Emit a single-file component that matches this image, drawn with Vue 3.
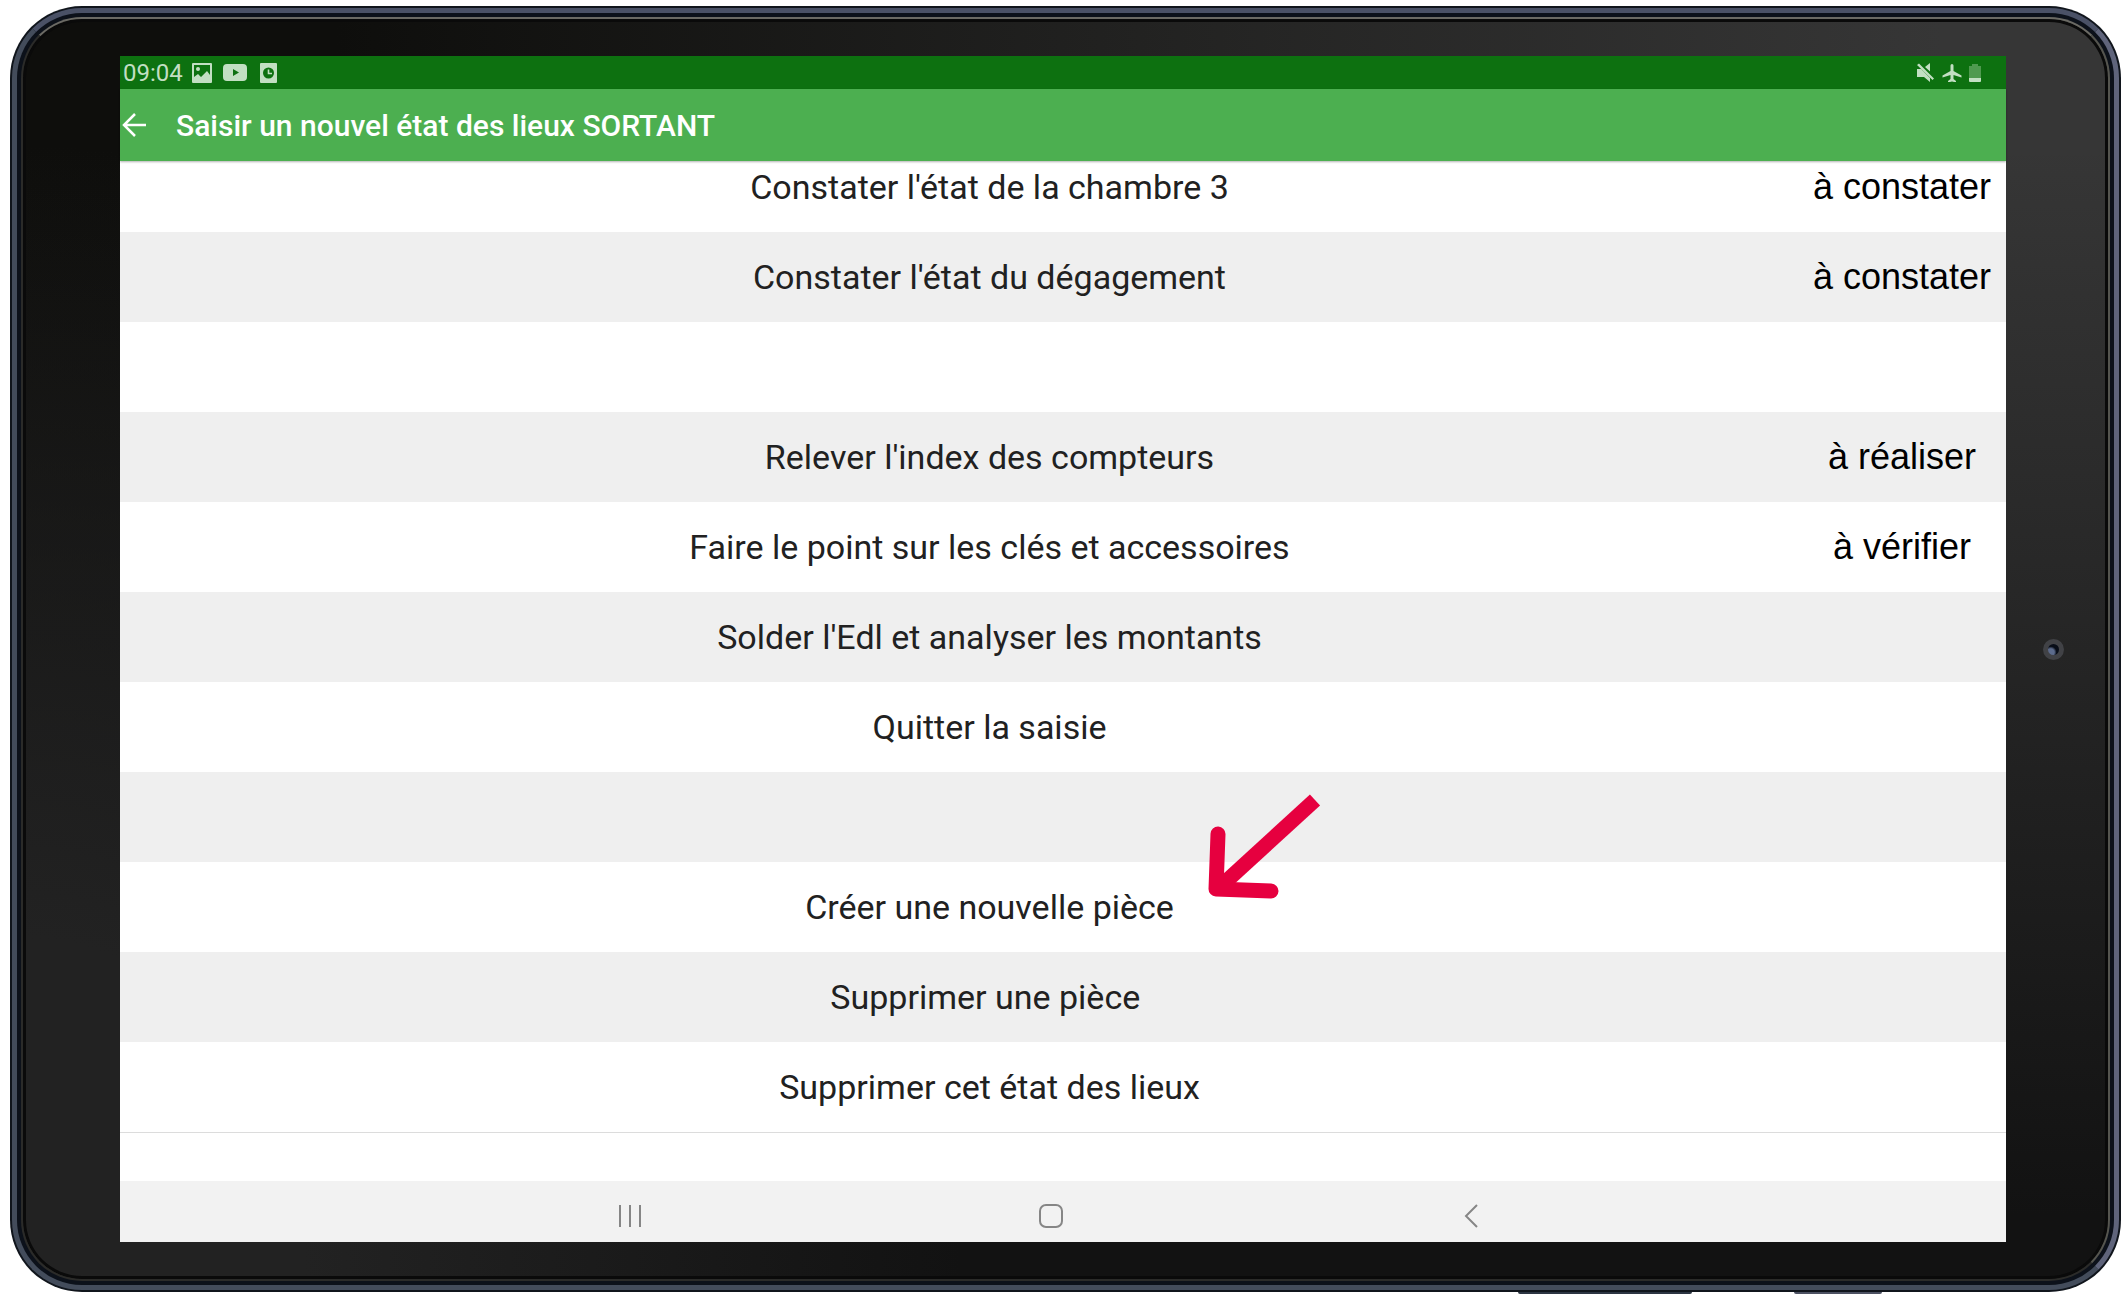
<script setup>
const rows = [
  { label: "Constater l'état de la chambre 3", status: 'à constater', cut: true },
  { label: "Constater l'état du dégagement", status: 'à constater' },
  { label: '', status: '' },
  { label: "Relever l'index des compteurs", status: 'à réaliser' },
  { label: 'Faire le point sur les clés et accessoires', status: 'à vérifier' },
  { label: "Solder l'Edl et analyser les montants", status: '' },
  { label: 'Quitter la saisie', status: '' },
  { label: '', status: '' },
  { label: 'Créer une nouvelle pièce', status: '', pointed: true },
  { label: 'Supprimer une pièce\u00a0', status: '' },
  { label: 'Supprimer cet état des lieux', status: '' }
]
</script>

<template>
  <div class="stage">
    <div class="device">
      <div class="rim">
        <div class="bezel">
          <main class="screen">
            <div class="status-bar">
              <span class="clock">09:04</span>
              <svg class="ico-picture" width="20" height="20" viewBox="0 0 20 20">
                <path fill-rule="evenodd" d="M1 0h18a1 1 0 0 1 1 1v18a1 1 0 0 1-1 1H1a1 1 0 0 1-1-1V1a1 1 0 0 1 1-1zM2 2v12l4-3 3 3 6-6 3 4V2z" />
                <circle cx="6" cy="6" r="2" />
              </svg>
              <svg class="ico-video" width="24" height="18" viewBox="0 0 24 18">
                <path fill-rule="evenodd" d="M4 0h16q4 0 4 4v9q0 4-4 4H4q-4 0-4-4V4q0-4 4-4zM10 5v7l6-3.500z" />
              </svg>
              <svg class="ico-clock" width="17" height="20" viewBox="0 0 17 20">
                <path fill-rule="evenodd" d="M1 0h15q1 0 1 1v18q0 1-1 1H1q-1 0-1-1V1q0-1 1-1zM8.500 4.500a5.500 5.500 0 1 0 0 11a5.500 5.500 0 1 0 0-11z" />
                <path d="M8.500 6.500v4h3.500" fill="none" stroke="#c2dfc2" stroke-width="1.600" />
              </svg>
              <span class="spacer"></span>
              <svg width="18" height="20" viewBox="0 0 18 20">
                <path d="M0 6h4l9 9v4l-6-5H0zM8 4l5-4v8.500zM0 2l2-1.500L17 15.500 15.500 17z" />
              </svg>
              <svg class="ico-plane" width="20" height="18" viewBox="0 0 20 18">
                <path d="M8.500 1.500a1.500 1.500 0 0 1 3 0V7l8 4.500v2l-8-2.500v4l2.500 2v1.500L10 17.500 6 18.500V17l2.500-2v-4l-8 2.500v-2l8-4.500z" />
              </svg>
              <svg class="ico-battery" width="12" height="18" viewBox="0 0 12 18">
                <path d="M3 0h6v2h3v12H0V2h3z" fill="#4f9a4f" />
                <path d="M0 14h12v3q0 1-1 1H1q-1 0-1-1z" />
              </svg>
            </div>

            <header class="app-bar">
              <button class="back" type="button" aria-label="Retour">
                <svg width="24" height="24" viewBox="0 0 24 24">
                  <path d="M24 12H2M13 1L2 12l11 11" fill="none" stroke="#fff" stroke-width="2.500" />
                </svg>
              </button>
              <h1>Saisir un nouvel état des lieux SORTANT</h1>
            </header>

            <ul class="list">
              <li v-for="(row, i) in rows" :key="i" class="row" :class="{ cut: row.cut }">
                <span class="label">{{ row.label }}</span>
                <span class="status">{{ row.status }}</span>
                <svg v-if="row.pointed" class="pointer" width="114" height="108" viewBox="0 0 114 108">
                  <path d="M107 8L13 94" fill="none" stroke="#e6003f" stroke-width="15" />
                  <path d="M10 42L8 97l55 2" fill="none" stroke="#e6003f" stroke-width="15" stroke-linecap="round" stroke-linejoin="round" />
                </svg>
              </li>
            </ul>

            <nav class="nav-bar">
              <button type="button" aria-label="Applications récentes">
                <svg width="24" height="24" viewBox="0 0 24 24">
                  <path d="M2 1v22M12 1v22M22 1v22" />
                </svg>
              </button>
              <button type="button" aria-label="Accueil">
                <svg width="26" height="24" viewBox="0 0 26 24">
                  <rect x="2" y="1" width="22" height="22" rx="6" />
                </svg>
              </button>
              <button type="button" aria-label="Précédent">
                <svg width="24" height="24" viewBox="0 0 24 24">
                  <path d="M17 1L6 12l11 11" />
                </svg>
              </button>
            </nav>
          </main>
          <div class="side">
            <span class="camera"></span>
          </div>
        </div>
      </div>
    </div>
    <div class="edge-keys">
      <span class="key power"></span>
      <span class="key"></span>
    </div>
  </div>
</template>

<style>
body {
  margin: 0;
  background: #fff;
}
</style>

<style scoped>
.stage {
  padding: 6px 6px 0 10px;
  font-family: Roboto, sans-serif;
}

.device {
  padding: 2px;
  border-radius: 72px;
  background: #10151c;
}

.rim {
  padding: 4px;
  border: 5px solid #434c5b;
  border-top-color: #4a5166;
  border-right-color: #5f647b;
  border-radius: 70px;
  background: #0c111a;
}

.bezel {
  display: flex;
  padding: 37px 0 37px 97px;
  border: 2px solid #2b2b29;
  border-top-color: #6b6a64;
  border-right-color: #55554f;
  border-radius: 61px;
  box-shadow: inset 0 0 0 3px #0a0a0a;
  background:
    radial-gradient(ellipse 45% 90% at 0% 100%, #222 30%, transparent 100%),
    linear-gradient(180deg, transparent 10%, #121212 95%),
    linear-gradient(90deg, #0e0e0c 15%, #363636 92%);
}

.side {
  display: flex;
  width: 102px;
  align-items: center;
  justify-content: center;
  padding-right: 8px;
  box-sizing: border-box;
}

.camera {
  width: 11px;
  height: 11px;
  border: 5px solid #414246;
  border-radius: 50%;
  background: radial-gradient(circle at 25% 75%, #5c6b8c 0 30%, #080d18 50%);
}

.screen {
  display: flex;
  min-width: 0;
  flex: 1;
  flex-direction: column;
  background: #fff;
}

.status-bar {
  display: flex;
  height: 33px;
  align-items: center;
  padding: 0 25px 0 3px;
  background: #0d7110;
  color: #c2dfc2;
}

.status-bar svg {
  fill: #c2dfc2;
}

.clock {
  width: 69px;
  font-size: 24px;
  line-height: 32px;
}

.ico-video {
  margin-left: 11px;
}

.ico-clock {
  margin-left: 13px;
}

.spacer {
  flex: 1;
}

.ico-plane,
.ico-battery {
  margin-left: 7px;
}

.app-bar {
  z-index: 1;
  display: flex;
  height: 72px;
  align-items: center;
  background: #4caf50;
  box-shadow: 0 1px 2px rgb(0 0 0 / 30%);
}

button {
  display: flex;
  padding: 0;
  border: 0;
  background: none;
}

.back {
  margin-left: 2px;
}

h1 {
  margin: 0 0 0 30px;
  padding-top: 2px;
  color: #fff;
  font-size: 30px;
  font-weight: 500;
  line-height: 40px;
}

.list {
  margin: 0;
  padding: 0 0 48px;
  list-style: none;
}

.row {
  position: relative;
  display: grid;
  height: 90px;
  align-items: center;
  padding-left: 61px;
  grid-template-columns: 1fr 208px;
  color: #212121;
  font-size: 34px;
  line-height: 44px;
  text-align: center;
}

.row:nth-child(even) {
  background: #efefef;
}

.row:last-child {
  border-bottom: 1px solid #dcdcdc;
}

.cut {
  height: 71px;
  align-items: start;
}

.cut > span {
  margin-top: 4px;
}

.status {
  color: #000;
  font-family: "Liberation Sans", Arial, sans-serif;
  font-size: 36px;
}

.pointer {
  position: absolute;
  bottom: 52px;
  left: 1088px;
}

.nav-bar {
  display: flex;
  height: 61px;
  align-items: center;
  justify-content: center;
  padding: 8px 24px 0 0;
  gap: 396px;
  box-sizing: border-box;
  background: #f2f2f2;
}

.nav-bar svg {
  fill: none;
  stroke: #868686;
  stroke-width: 2;
}

.edge-keys {
  display: flex;
  height: 2px;
  justify-content: flex-end;
  padding-right: 239px;
  gap: 102px;
}

.key {
  width: 88px;
  border-radius: 0 0 2px 2px;
  background: #4c5162;
}

.power {
  width: 174px;
  background: #2c3542;
}
</style>
